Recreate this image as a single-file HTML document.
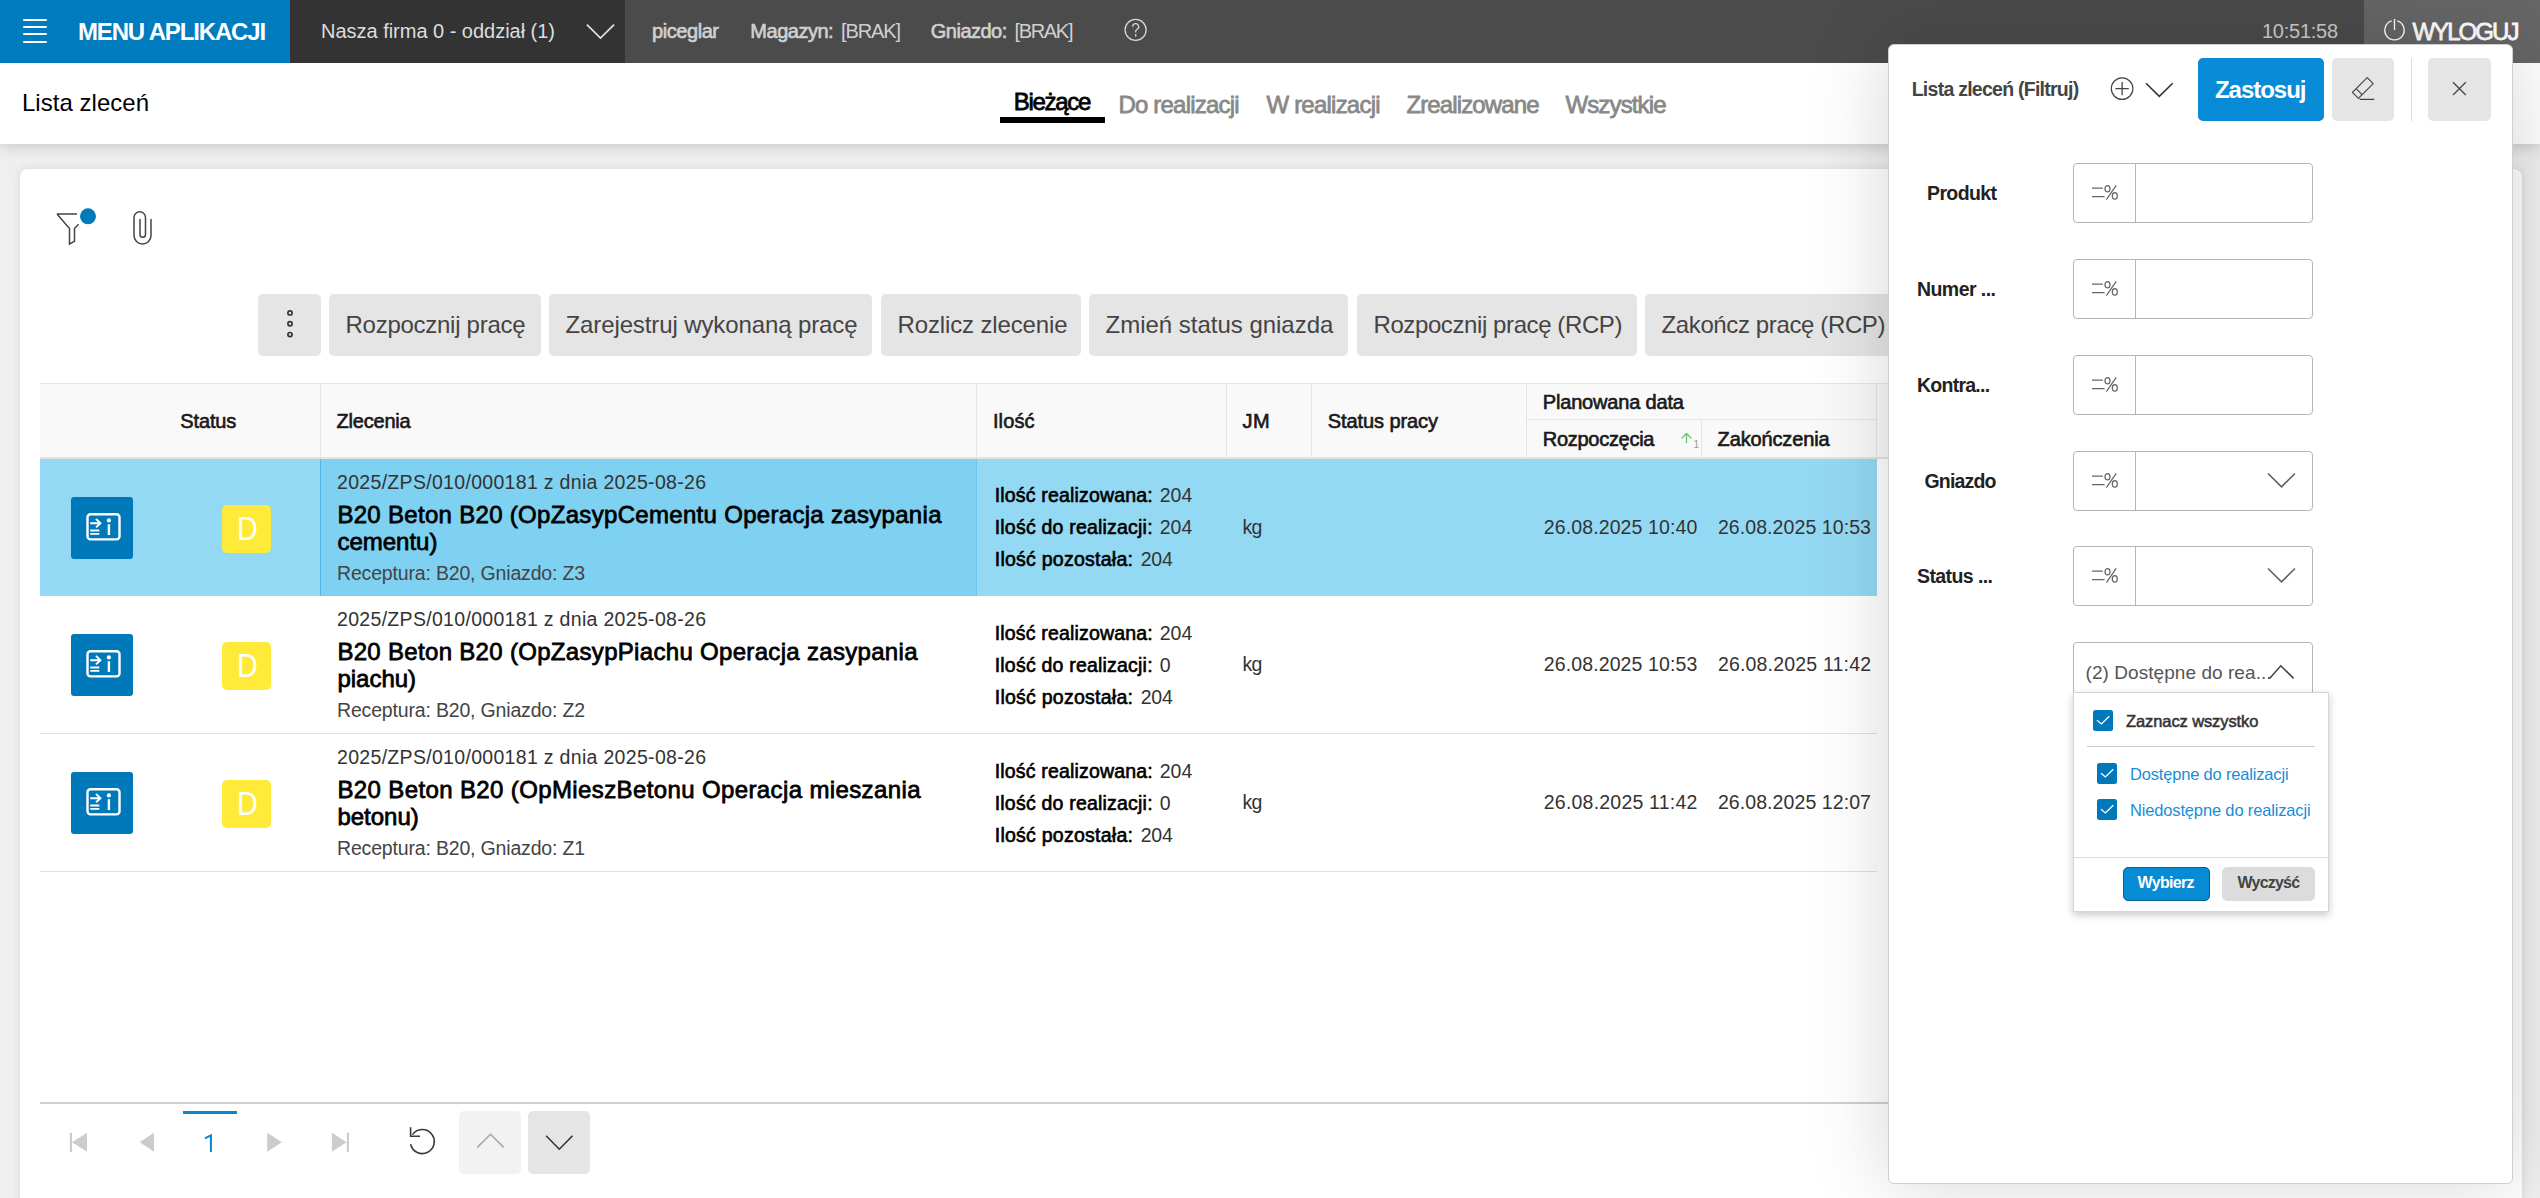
<!DOCTYPE html>
<html><head><meta charset="utf-8"><title>Lista zleceń</title>
<style>
html,body{margin:0;padding:0;width:2540px;height:1198px;overflow:hidden;background:#efefef;}
body{position:relative;font-family:"Liberation Sans",sans-serif;}
.r{position:absolute;box-sizing:border-box;}
.t{position:absolute;white-space:nowrap;line-height:1.117;}
.n{font-weight:normal;color:#333;}
</style></head><body>
<div class="r" style="left:0px;top:0px;width:2540px;height:1198px;background:#efefef;"></div>
<div class="r" style="left:0px;top:63px;width:2540px;height:81px;background:#fff;box-shadow:0 2px 14px rgba(0,0,0,0.18);"></div>
<div class="r" style="left:20px;top:169px;width:2502px;height:1100px;background:#fff;border-radius:8px;box-shadow:0 0 10px rgba(0,0,0,0.10);"></div>
<div class="r" style="left:0px;top:0px;width:2540px;height:63px;background:#4b4b4b;"></div>
<div class="r" style="left:0px;top:0px;width:290px;height:63px;background:#007bbd;"></div>
<div class="r" style="left:290px;top:0px;width:335px;height:63px;background:#333333;"></div>
<div class="r" style="left:2364px;top:0px;width:176px;height:63px;background:#666666;"></div>
<div class="r" style="left:23px;top:18.9px;width:24px;height:2.1px;background:#fff;border-radius:1px;"></div>
<div class="r" style="left:23px;top:26.1px;width:24px;height:2.1px;background:#fff;border-radius:1px;"></div>
<div class="r" style="left:23px;top:33.4px;width:24px;height:2.1px;background:#fff;border-radius:1px;"></div>
<div class="r" style="left:23px;top:40.8px;width:24px;height:2.1px;background:#fff;border-radius:1px;"></div>
<div class="t" style="left:78.00px;top:18.78px;font-size:24px;color:#fff;font-weight:bold;letter-spacing:-1.154px;">MENU APLIKACJI</div>
<div class="t" style="left:321.00px;top:20.40px;font-size:20px;color:#dddddd;letter-spacing:-0.019px;">Nasza firma 0 - oddział (1)</div>
<svg class="r" style="left:575px;top:10px" width="60" height="40" viewBox="575 10 60 40"><path d="M586.9 24.7 L600.5 38.1 L614.1 24.7" fill="none" stroke="#e0e0e0" stroke-width="1.8"/></svg>
<div class="t" style="left:652.12px;top:20.40px;font-size:20px;color:#d0d0d0;-webkit-text-stroke:0.64px #d0d0d0;letter-spacing:-0.449px;">piceglar</div>
<div class="t" style="left:750.32px;top:20.40px;font-size:20px;color:#d0d0d0;-webkit-text-stroke:0.64px #d0d0d0;letter-spacing:-0.484px;">Magazyn:</div>
<div class="t" style="left:841.00px;top:20.40px;font-size:20px;color:#d0d0d0;letter-spacing:-1.100px;">[BRAK]</div>
<div class="t" style="left:930.82px;top:20.40px;font-size:20px;color:#d0d0d0;-webkit-text-stroke:0.64px #d0d0d0;letter-spacing:-0.520px;">Gniazdo:</div>
<div class="t" style="left:1014.40px;top:20.40px;font-size:20px;color:#d0d0d0;letter-spacing:-1.300px;">[BRAK]</div>
<svg class="r" style="left:1115px;top:12px" width="40" height="38" viewBox="1115 12 40 38"><circle cx="1135.6" cy="29.9" r="10.5" fill="none" stroke="#d6d6d6" stroke-width="1.3"/><path d="M1132.7 26.8 A3 3 0 1 1 1137.1 29.3 C1136.2 29.8 1135.7 30.3 1135.7 31.3 V32.6" fill="none" stroke="#d6d6d6" stroke-width="1.3"/><rect x="1135.05" y="34" width="1.3" height="2.6" fill="#d6d6d6"/></svg>
<div class="t" style="left:2262.00px;top:20.40px;font-size:20px;color:#cccccc;letter-spacing:-0.250px;">10:51:58</div>
<svg class="r" style="left:2375px;top:12px" width="40" height="38" viewBox="2375 12 40 38"><path d="M2391.66 20.97 A9.7 9.7 0 1 0 2397.34 20.97" fill="none" stroke="#fff" stroke-width="1.35"/><path d="M2394.5 19 V30.1" stroke="#fff" stroke-width="1.35"/></svg>
<div class="t" style="left:2412.38px;top:18.78px;font-size:24px;color:#ffffff;-webkit-text-stroke:0.77px #ffffff;letter-spacing:-1.920px;">WYLOGUJ</div>
<div class="t" style="left:22.00px;top:89.78px;font-size:24px;color:#000;letter-spacing:0.023px;">Lista zleceń</div>
<div class="t" style="left:1013.68px;top:89.48px;font-size:24px;color:#000;-webkit-text-stroke:0.77px #000;letter-spacing:-1.295px;">Bieżące</div>
<div class="r" style="left:1000px;top:117px;width:105px;height:5.7px;background:#000;"></div>
<div class="t" style="left:1118.38px;top:91.78px;font-size:24px;color:#888;-webkit-text-stroke:0.77px #888;letter-spacing:-0.793px;">Do realizacji</div>
<div class="t" style="left:1266.38px;top:91.78px;font-size:24px;color:#888;-webkit-text-stroke:0.77px #888;letter-spacing:-0.774px;">W realizacji</div>
<div class="t" style="left:1406.38px;top:91.78px;font-size:24px;color:#888;-webkit-text-stroke:0.77px #888;letter-spacing:-0.865px;">Zrealizowane</div>
<div class="t" style="left:1565.38px;top:91.78px;font-size:24px;color:#888;-webkit-text-stroke:0.77px #888;letter-spacing:-0.846px;">Wszystkie</div>
<svg class="r" style="left:50px;top:200px" width="50" height="50" viewBox="50 200 50 50"><path d="M57 214 H77 M57 214 L69.5 228.5 V244 L74.5 241.3 V228.5 L78.5 224.3" fill="none" stroke="#444" stroke-width="1.5" stroke-linejoin="miter"/><circle cx="88" cy="216.3" r="8" fill="#0079bb"/></svg>
<svg class="r" style="left:125px;top:205px" width="35" height="45" viewBox="125 205 35 45"><path d="M140 219 V234.5 A2.75 2.75 0 0 0 145.5 234.5 V217.5 A5.75 5.75 0 0 0 134 217.5 V235.5 A8.5 8.5 0 0 0 151 235.5 V219" fill="none" stroke="#444" stroke-width="1.5"/></svg>
<div class="r" style="left:258px;top:294px;width:63px;height:62px;background:#e5e5e5;border-radius:5px;"></div>
<svg class="r" style="left:280px;top:305px" width="20" height="40" viewBox="280 305 20 40"><g fill="none" stroke="#333" stroke-width="1.7"><circle cx="290" cy="312.9" r="2.1"/><circle cx="290" cy="323.7" r="2.1"/><circle cx="290" cy="334.6" r="2.1"/></g></svg>
<div class="r" style="left:329px;top:294px;width:212px;height:62px;background:#e5e5e5;border-radius:5px;"></div>
<div class="t" style="left:345.50px;top:311.78px;font-size:24px;color:#444;letter-spacing:-0.267px;">Rozpocznij pracę</div>
<div class="r" style="left:549px;top:294px;width:323px;height:62px;background:#e5e5e5;border-radius:5px;"></div>
<div class="t" style="left:565.50px;top:311.78px;font-size:24px;color:#444;letter-spacing:-0.110px;">Zarejestruj wykonaną pracę</div>
<div class="r" style="left:881px;top:294px;width:200px;height:62px;background:#e5e5e5;border-radius:5px;"></div>
<div class="t" style="left:897.50px;top:311.78px;font-size:24px;color:#444;letter-spacing:-0.133px;">Rozlicz zlecenie</div>
<div class="r" style="left:1089px;top:294px;width:259px;height:62px;background:#e5e5e5;border-radius:5px;"></div>
<div class="t" style="left:1105.50px;top:311.78px;font-size:24px;color:#444;letter-spacing:-0.013px;">Zmień status gniazda</div>
<div class="r" style="left:1357px;top:294px;width:280px;height:62px;background:#e5e5e5;border-radius:5px;"></div>
<div class="t" style="left:1373.50px;top:311.78px;font-size:24px;color:#444;letter-spacing:-0.405px;">Rozpocznij pracę (RCP)</div>
<div class="r" style="left:1645px;top:294px;width:260px;height:62px;background:#e5e5e5;border-radius:5px;"></div>
<div class="t" style="left:1661.50px;top:311.78px;font-size:24px;color:#444;letter-spacing:-0.375px;">Zakończ pracę (RCP)</div>
<div class="r" style="left:40px;top:383px;width:1848px;height:1px;background:#e6e6e6;"></div>
<div class="r" style="left:40px;top:384px;width:1848px;height:73px;background:#f9f9f9;"></div>
<div class="r" style="left:40px;top:457px;width:1848px;height:2px;background:#e3e3e3;"></div>
<div class="r" style="left:320px;top:384px;width:1px;height:73px;background:#e6e6e6;"></div>
<div class="r" style="left:976px;top:384px;width:1px;height:73px;background:#e6e6e6;"></div>
<div class="r" style="left:1226px;top:384px;width:1px;height:73px;background:#e6e6e6;"></div>
<div class="r" style="left:1311px;top:384px;width:1px;height:73px;background:#e6e6e6;"></div>
<div class="r" style="left:1526px;top:384px;width:1px;height:73px;background:#e6e6e6;"></div>
<div class="r" style="left:1526px;top:419px;width:350px;height:1px;background:#e6e6e6;"></div>
<div class="r" style="left:1701px;top:420px;width:1px;height:37px;background:#e6e6e6;"></div>
<div class="r" style="left:1876px;top:384px;width:1px;height:73px;background:#e6e6e6;"></div>
<div class="t" style="left:180.32px;top:410.40px;font-size:20px;color:#1a1a1a;-webkit-text-stroke:0.64px #1a1a1a;letter-spacing:-0.138px;">Status</div>
<div class="t" style="left:336.62px;top:410.40px;font-size:20px;color:#1a1a1a;-webkit-text-stroke:0.64px #1a1a1a;letter-spacing:-0.227px;">Zlecenia</div>
<div class="t" style="left:992.92px;top:410.40px;font-size:20px;color:#1a1a1a;-webkit-text-stroke:0.64px #1a1a1a;letter-spacing:0.127px;">Ilość</div>
<div class="t" style="left:1242.62px;top:410.40px;font-size:20px;color:#1a1a1a;-webkit-text-stroke:0.64px #1a1a1a;letter-spacing:0.310px;">JM</div>
<div class="t" style="left:1327.72px;top:410.40px;font-size:20px;color:#1a1a1a;-webkit-text-stroke:0.64px #1a1a1a;letter-spacing:-0.081px;">Status pracy</div>
<div class="t" style="left:1542.82px;top:390.90px;font-size:20px;color:#1a1a1a;-webkit-text-stroke:0.64px #1a1a1a;letter-spacing:-0.180px;">Planowana data</div>
<div class="t" style="left:1542.82px;top:427.90px;font-size:20px;color:#1a1a1a;-webkit-text-stroke:0.64px #1a1a1a;letter-spacing:-0.289px;">Rozpoczęcia</div>
<div class="t" style="left:1717.62px;top:427.90px;font-size:20px;color:#1a1a1a;-webkit-text-stroke:0.64px #1a1a1a;letter-spacing:-0.144px;">Zakończenia</div>
<svg class="r" style="left:1678px;top:430px" width="24" height="22" viewBox="1678 430 24 22"><path d="M1686.5 443 V433.5 M1681.5 438.5 L1686.5 433.5 L1691.5 438.5" fill="none" stroke="#6ac66a" stroke-width="1.3"/></svg>
<div class="t" style="left:1693.50px;top:439.45px;font-size:10px;color:#999;">1</div>
<div class="r" style="left:40px;top:459px;width:1837px;height:137px;background:#94d9f3;"></div>
<div class="r" style="left:320px;top:459px;width:657px;height:137px;background:#7fd1f1;border-left:1.5px solid #4cb8e6;border-right:1px solid #6cc6ec;"></div>
<div class="r" style="left:71px;top:497px;width:62px;height:62px;background:#0079bb;border-radius:3px;"></div>
<svg class="r" style="left:71px;top:497px" width="62" height="62" viewBox="0 0 62 62"><rect x="16.5" y="17.2" width="32" height="25.2" rx="3" fill="none" stroke="#fff" stroke-width="2.4"/><path d="M19.3 26.2 H29.6 M25 21.9 L29.4 26.2 L25 30.4" fill="none" stroke="#fff" stroke-width="2"/><path d="M19.3 33.5 H28.3 M19.3 36.9 H28.3" fill="none" stroke="#fff" stroke-width="1.9"/><circle cx="37.9" cy="23.4" r="2.1" fill="#fff"/><path d="M37.9 27.2 V38" stroke="#fff" stroke-width="2.4"/></svg>
<div class="r" style="left:221.6px;top:505px;width:49px;height:48px;background:#ffea3a;border-radius:5px;"></div>
<div class="t" style="left:236.90px;top:509.73px;font-size:34px;color:#fff;transform-origin:0.00px 0;transform:scaleX(0.8462);">D</div>
<div class="t" style="left:337.00px;top:471.65px;font-size:19.5px;color:#333;letter-spacing:0.312px;">2025/ZPS/010/000181 z dnia 2025-08-26</div>
<div class="t" style="left:337.38px;top:501.78px;font-size:24px;color:#000;-webkit-text-stroke:0.77px #000;letter-spacing:0.308px;">B20 Beton B20 (OpZasypCementu Operacja zasypania</div>
<div class="t" style="left:337.38px;top:528.58px;font-size:24px;color:#000;-webkit-text-stroke:0.77px #000;">cementu)</div>
<div class="t" style="left:337.00px;top:562.75px;font-size:19.5px;color:#444;letter-spacing:-0.173px;">Receptura: B20, Gniazdo: Z3</div>
<div class="t" style="left:994.71px;top:484.85px;font-size:19.5px;color:#000;-webkit-text-stroke:0.62px #000;letter-spacing:0.175px;">Ilość realizowana:</div>
<div class="t" style="left:1159.70px;top:484.85px;font-size:19.5px;color:#333;">204</div>
<div class="t" style="left:994.71px;top:516.85px;font-size:19.5px;color:#000;-webkit-text-stroke:0.62px #000;letter-spacing:0.209px;">Ilość do realizacji:</div>
<div class="t" style="left:1159.70px;top:516.85px;font-size:19.5px;color:#333;">204</div>
<div class="t" style="left:994.71px;top:548.85px;font-size:19.5px;color:#000;-webkit-text-stroke:0.62px #000;letter-spacing:0.258px;">Ilość pozostała:</div>
<div class="t" style="left:1140.70px;top:548.85px;font-size:19.5px;color:#333;letter-spacing:-0.250px;">204</div>
<div class="t" style="left:1242.40px;top:516.65px;font-size:19.5px;color:#333;letter-spacing:-0.600px;">kg</div>
<div class="t" style="left:1543.80px;top:516.65px;font-size:19.5px;color:#333;letter-spacing:0.110px;">26.08.2025 10:40</div>
<div class="t" style="left:1717.90px;top:516.65px;font-size:19.5px;color:#333;letter-spacing:0.083px;">26.08.2025 10:53</div>
<div class="r" style="left:40px;top:733px;width:1837px;height:1px;background:#e2e2e2;"></div>
<div class="r" style="left:71px;top:634px;width:62px;height:62px;background:#0079bb;border-radius:3px;"></div>
<svg class="r" style="left:71px;top:634px" width="62" height="62" viewBox="0 0 62 62"><rect x="16.5" y="17.2" width="32" height="25.2" rx="3" fill="none" stroke="#fff" stroke-width="2.4"/><path d="M19.3 26.2 H29.6 M25 21.9 L29.4 26.2 L25 30.4" fill="none" stroke="#fff" stroke-width="2"/><path d="M19.3 33.5 H28.3 M19.3 36.9 H28.3" fill="none" stroke="#fff" stroke-width="1.9"/><circle cx="37.9" cy="23.4" r="2.1" fill="#fff"/><path d="M37.9 27.2 V38" stroke="#fff" stroke-width="2.4"/></svg>
<div class="r" style="left:221.6px;top:642px;width:49px;height:48px;background:#ffea3a;border-radius:5px;"></div>
<div class="t" style="left:236.90px;top:646.73px;font-size:34px;color:#fff;transform-origin:0.00px 0;transform:scaleX(0.8462);">D</div>
<div class="t" style="left:337.00px;top:609.35px;font-size:19.5px;color:#333;letter-spacing:0.312px;">2025/ZPS/010/000181 z dnia 2025-08-26</div>
<div class="t" style="left:337.38px;top:639.48px;font-size:24px;color:#000;-webkit-text-stroke:0.77px #000;letter-spacing:0.315px;">B20 Beton B20 (OpZasypPiachu Operacja zasypania</div>
<div class="t" style="left:337.38px;top:666.28px;font-size:24px;color:#000;-webkit-text-stroke:0.77px #000;">piachu)</div>
<div class="t" style="left:337.00px;top:700.45px;font-size:19.5px;color:#444;letter-spacing:-0.173px;">Receptura: B20, Gniazdo: Z2</div>
<div class="t" style="left:994.71px;top:622.65px;font-size:19.5px;color:#000;-webkit-text-stroke:0.62px #000;letter-spacing:0.175px;">Ilość realizowana:</div>
<div class="t" style="left:1159.70px;top:622.65px;font-size:19.5px;color:#333;">204</div>
<div class="t" style="left:994.71px;top:654.65px;font-size:19.5px;color:#000;-webkit-text-stroke:0.62px #000;letter-spacing:0.209px;">Ilość do realizacji:</div>
<div class="t" style="left:1159.70px;top:654.65px;font-size:19.5px;color:#333;">0</div>
<div class="t" style="left:994.71px;top:686.65px;font-size:19.5px;color:#000;-webkit-text-stroke:0.62px #000;letter-spacing:0.258px;">Ilość pozostała:</div>
<div class="t" style="left:1140.70px;top:686.65px;font-size:19.5px;color:#333;letter-spacing:-0.250px;">204</div>
<div class="t" style="left:1242.40px;top:654.45px;font-size:19.5px;color:#333;letter-spacing:-0.600px;">kg</div>
<div class="t" style="left:1543.80px;top:654.45px;font-size:19.5px;color:#333;letter-spacing:0.110px;">26.08.2025 10:53</div>
<div class="t" style="left:1717.90px;top:654.45px;font-size:19.5px;color:#333;letter-spacing:0.183px;">26.08.2025 11:42</div>
<div class="r" style="left:40px;top:871px;width:1837px;height:1px;background:#e2e2e2;"></div>
<div class="r" style="left:71px;top:772px;width:62px;height:62px;background:#0079bb;border-radius:3px;"></div>
<svg class="r" style="left:71px;top:772px" width="62" height="62" viewBox="0 0 62 62"><rect x="16.5" y="17.2" width="32" height="25.2" rx="3" fill="none" stroke="#fff" stroke-width="2.4"/><path d="M19.3 26.2 H29.6 M25 21.9 L29.4 26.2 L25 30.4" fill="none" stroke="#fff" stroke-width="2"/><path d="M19.3 33.5 H28.3 M19.3 36.9 H28.3" fill="none" stroke="#fff" stroke-width="1.9"/><circle cx="37.9" cy="23.4" r="2.1" fill="#fff"/><path d="M37.9 27.2 V38" stroke="#fff" stroke-width="2.4"/></svg>
<div class="r" style="left:221.6px;top:780px;width:49px;height:48px;background:#ffea3a;border-radius:5px;"></div>
<div class="t" style="left:236.90px;top:784.73px;font-size:34px;color:#fff;transform-origin:0.00px 0;transform:scaleX(0.8462);">D</div>
<div class="t" style="left:337.00px;top:746.65px;font-size:19.5px;color:#333;letter-spacing:0.312px;">2025/ZPS/010/000181 z dnia 2025-08-26</div>
<div class="t" style="left:337.38px;top:776.78px;font-size:24px;color:#000;-webkit-text-stroke:0.77px #000;letter-spacing:0.380px;">B20 Beton B20 (OpMieszBetonu Operacja mieszania</div>
<div class="t" style="left:337.38px;top:803.58px;font-size:24px;color:#000;-webkit-text-stroke:0.77px #000;">betonu)</div>
<div class="t" style="left:337.00px;top:837.75px;font-size:19.5px;color:#444;letter-spacing:-0.173px;">Receptura: B20, Gniazdo: Z1</div>
<div class="t" style="left:994.71px;top:760.65px;font-size:19.5px;color:#000;-webkit-text-stroke:0.62px #000;letter-spacing:0.175px;">Ilość realizowana:</div>
<div class="t" style="left:1159.70px;top:760.65px;font-size:19.5px;color:#333;">204</div>
<div class="t" style="left:994.71px;top:792.65px;font-size:19.5px;color:#000;-webkit-text-stroke:0.62px #000;letter-spacing:0.209px;">Ilość do realizacji:</div>
<div class="t" style="left:1159.70px;top:792.65px;font-size:19.5px;color:#333;">0</div>
<div class="t" style="left:994.71px;top:824.65px;font-size:19.5px;color:#000;-webkit-text-stroke:0.62px #000;letter-spacing:0.258px;">Ilość pozostała:</div>
<div class="t" style="left:1140.70px;top:824.65px;font-size:19.5px;color:#333;letter-spacing:-0.250px;">204</div>
<div class="t" style="left:1242.40px;top:792.45px;font-size:19.5px;color:#333;letter-spacing:-0.600px;">kg</div>
<div class="t" style="left:1543.80px;top:792.45px;font-size:19.5px;color:#333;letter-spacing:0.210px;">26.08.2025 11:42</div>
<div class="t" style="left:1717.90px;top:792.45px;font-size:19.5px;color:#333;letter-spacing:0.083px;">26.08.2025 12:07</div>
<div class="r" style="left:40px;top:1102px;width:1848px;height:1.5px;background:#cfcfcf;"></div>
<div class="r" style="left:183px;top:1111px;width:54px;height:3px;background:#0a86d0;"></div>
<svg class="r" style="left:60px;top:1120px" width="300" height="45" viewBox="60 1120 300 45"><g fill="#cccccc"><rect x="69.8" y="1132.8" width="2.2" height="19"/><path d="M87 1132.8 V1151.7 L72 1142.2 Z"/><path d="M154 1132.8 V1151.7 L139.7 1142.2 Z"/><path d="M267.2 1132.8 V1151.7 L282 1142.2 Z"/><path d="M331.9 1132.8 V1151.7 L346.6 1142.2 Z"/><rect x="346.8" y="1132.8" width="2.2" height="19"/></g></svg>
<svg class="r" style="left:200px;top:1130px" width="20" height="26" viewBox="200 1130 20 26"><path d="M204.9 1138.3 L210.9 1135.3 V1152" fill="none" stroke="#0a86d0" stroke-width="2" stroke-linejoin="miter"/></svg>
<svg class="r" style="left:400px;top:1120px" width="40" height="45" viewBox="400 1120 40 45"><path d="M410.6 1144.3 A12 12 0 1 0 412.5 1134.6" fill="none" stroke="#3a3a3a" stroke-width="1.6"/><path d="M410.6 1127.2 V1136.3 H420" fill="none" stroke="#3a3a3a" stroke-width="1.6"/></svg>
<div class="r" style="left:459px;top:1111px;width:62px;height:63px;background:#f2f2f2;border-radius:5px;"></div>
<div class="r" style="left:528px;top:1111px;width:62px;height:63px;background:#e5e5e5;border-radius:5px;"></div>
<svg class="r" style="left:459px;top:1111px" width="131" height="63" viewBox="459 1111 131 63"><path d="M477.3 1147.4 L490.5 1134.3 L503.7 1147.4" fill="none" stroke="#a8a8a8" stroke-width="1.6"/><path d="M546.1 1135.8 L559.3 1149.2 L572.5 1135.8" fill="none" stroke="#333" stroke-width="1.6"/></svg>
<div class="r" style="left:1888px;top:44px;width:625px;height:1140px;background:#fff;border:1px solid #cfcfcf;border-radius:6px;box-shadow:0 0 80px rgba(0,0,0,0.17);"></div>
<div class="t" style="left:1911.70px;top:78.85px;font-size:19.5px;color:#444;font-weight:bold;letter-spacing:-0.743px;">Lista zleceń (Filtruj)</div>
<svg class="r" style="left:2105px;top:72px" width="75" height="34" viewBox="2105 72 75 34"><circle cx="2122.1" cy="88.6" r="10.8" fill="none" stroke="#444" stroke-width="1.2"/><path d="M2115.4 88.6 H2128.8 M2122.1 81.9 V95.3" stroke="#444" stroke-width="1.3"/><path d="M2146 83.2 L2159.3 96.4 L2172.7 83.2" fill="none" stroke="#333" stroke-width="1.6"/></svg>
<div class="r" style="left:2198px;top:58px;width:126px;height:63px;background:#088bd6;border-radius:5px;"></div>
<div class="t" style="left:2215.00px;top:76.78px;font-size:24px;color:#fff;font-weight:bold;letter-spacing:-1.036px;">Zastosuj</div>
<div class="r" style="left:2332px;top:58px;width:62px;height:63px;background:#e5e5e5;border-radius:5px;"></div>
<svg class="r" style="left:2332px;top:58px" width="62" height="63" viewBox="2332 58 62 63"><path d="M2367.2 77.6 L2373.2 83.6 L2358.4 98.4 L2352.4 92.4 Z M2356.1 88.7 L2362.1 94.7 M2359.6 99.4 H2374.3" fill="none" stroke="#444" stroke-width="1.2" stroke-linejoin="round"/></svg>
<div class="r" style="left:2411px;top:58px;width:1px;height:63px;background:#dddddd;"></div>
<div class="r" style="left:2428px;top:58px;width:63px;height:63px;background:#e5e5e5;border-radius:5px;"></div>
<svg class="r" style="left:2428px;top:58px" width="63" height="63" viewBox="2428 58 63 63"><path d="M2453 82.3 L2465.8 95 M2465.8 82.3 L2453 95" stroke="#444" stroke-width="1.3"/></svg>
<div class="t" style="left:1927.00px;top:182.85px;font-size:19.5px;color:#222;font-weight:bold;letter-spacing:-0.625px;">Produkt</div>
<div class="r" style="left:2073px;top:163px;width:240px;height:60px;background:#fff;border:1px solid #b5b5b5;border-radius:4px;"></div>
<div class="r" style="left:2135px;top:164px;width:1px;height:58px;background:#b5b5b5;"></div>
<svg class="r" style="left:2088px;top:181px" width="34" height="24" viewBox="0 0 34 24"><g fill="none" stroke="#666" stroke-width="1.25"><path d="M4 7 H14.8 M4 15.6 H16.6 M18.4 18.6 L28.2 4.3"/><ellipse cx="19.5" cy="7.7" rx="2.5" ry="3.2"/><ellipse cx="26.8" cy="14.9" rx="2.5" ry="3.2"/></g></svg>
<div class="t" style="left:1917.00px;top:278.85px;font-size:19.5px;color:#222;font-weight:bold;letter-spacing:-0.562px;">Numer ...</div>
<div class="r" style="left:2073px;top:259px;width:240px;height:60px;background:#fff;border:1px solid #b5b5b5;border-radius:4px;"></div>
<div class="r" style="left:2135px;top:260px;width:1px;height:58px;background:#b5b5b5;"></div>
<svg class="r" style="left:2088px;top:277px" width="34" height="24" viewBox="0 0 34 24"><g fill="none" stroke="#666" stroke-width="1.25"><path d="M4 7 H14.8 M4 15.6 H16.6 M18.4 18.6 L28.2 4.3"/><ellipse cx="19.5" cy="7.7" rx="2.5" ry="3.2"/><ellipse cx="26.8" cy="14.9" rx="2.5" ry="3.2"/></g></svg>
<div class="t" style="left:1917.00px;top:374.85px;font-size:19.5px;color:#222;font-weight:bold;letter-spacing:-0.750px;">Kontra...</div>
<div class="r" style="left:2073px;top:355px;width:240px;height:60px;background:#fff;border:1px solid #b5b5b5;border-radius:4px;"></div>
<div class="r" style="left:2135px;top:356px;width:1px;height:58px;background:#b5b5b5;"></div>
<svg class="r" style="left:2088px;top:373px" width="34" height="24" viewBox="0 0 34 24"><g fill="none" stroke="#666" stroke-width="1.25"><path d="M4 7 H14.8 M4 15.6 H16.6 M18.4 18.6 L28.2 4.3"/><ellipse cx="19.5" cy="7.7" rx="2.5" ry="3.2"/><ellipse cx="26.8" cy="14.9" rx="2.5" ry="3.2"/></g></svg>
<div class="t" style="left:1924.50px;top:470.85px;font-size:19.5px;color:#222;font-weight:bold;letter-spacing:-0.833px;">Gniazdo</div>
<div class="r" style="left:2073px;top:451px;width:240px;height:60px;background:#fff;border:1px solid #b5b5b5;border-radius:4px;"></div>
<div class="r" style="left:2135px;top:452px;width:1px;height:58px;background:#b5b5b5;"></div>
<svg class="r" style="left:2088px;top:469px" width="34" height="24" viewBox="0 0 34 24"><g fill="none" stroke="#666" stroke-width="1.25"><path d="M4 7 H14.8 M4 15.6 H16.6 M18.4 18.6 L28.2 4.3"/><ellipse cx="19.5" cy="7.7" rx="2.5" ry="3.2"/><ellipse cx="26.8" cy="14.9" rx="2.5" ry="3.2"/></g></svg>
<svg class="r" style="left:2262px;top:469px" width="40" height="24" viewBox="0 0 40 24"><path d="M6 4.5 L19.5 17.8 L33 4.5" fill="none" stroke="#616161" stroke-width="1.6"/></svg>
<div class="t" style="left:1917.00px;top:565.85px;font-size:19.5px;color:#222;font-weight:bold;letter-spacing:-0.583px;">Status ...</div>
<div class="r" style="left:2073px;top:546px;width:240px;height:60px;background:#fff;border:1px solid #b5b5b5;border-radius:4px;"></div>
<div class="r" style="left:2135px;top:547px;width:1px;height:58px;background:#b5b5b5;"></div>
<svg class="r" style="left:2088px;top:564px" width="34" height="24" viewBox="0 0 34 24"><g fill="none" stroke="#666" stroke-width="1.25"><path d="M4 7 H14.8 M4 15.6 H16.6 M18.4 18.6 L28.2 4.3"/><ellipse cx="19.5" cy="7.7" rx="2.5" ry="3.2"/><ellipse cx="26.8" cy="14.9" rx="2.5" ry="3.2"/></g></svg>
<svg class="r" style="left:2262px;top:564px" width="40" height="24" viewBox="0 0 40 24"><path d="M6 4.5 L19.5 17.8 L33 4.5" fill="none" stroke="#616161" stroke-width="1.6"/></svg>
<div class="r" style="left:2073px;top:642px;width:240px;height:60px;background:#fff;border:1px solid #b5b5b5;border-radius:4px;"></div>
<div class="t" style="left:2085.50px;top:661.80px;font-size:19px;color:#555;letter-spacing:0.060px;">(2) Dostępne do rea...</div>
<svg class="r" style="left:2262px;top:658px" width="40" height="24" viewBox="2262 658 40 24"><path d="M2269.6 678.4 L2280.8 665.8 L2293.6 678.4" fill="none" stroke="#444" stroke-width="1.5"/></svg>
<div class="r" style="left:2073px;top:692px;width:256px;height:220px;background:#fff;border:1px solid #d6d6d6;box-shadow:0 3px 8px rgba(0,0,0,0.22);"></div>
<div class="r" style="left:2093px;top:710px;width:20px;height:21px;background:#0079bb;border-radius:2.5px;"></div>
<svg class="r" style="left:2093px;top:710px" width="20" height="21" viewBox="0 0 20 21"><path d="M4 10.2 L8.4 13.9 L16.3 6.2" fill="none" stroke="#fff" stroke-width="1.3"/></svg>
<div class="t" style="left:2126.06px;top:712.17px;font-size:16.5px;color:#333;-webkit-text-stroke:0.53px #333;letter-spacing:-0.105px;">Zaznacz wszystko</div>
<div class="r" style="left:2087px;top:746px;width:228px;height:1px;background:#cccccc;"></div>
<div class="r" style="left:2097px;top:762.5px;width:20px;height:21px;background:#0079bb;border-radius:2.5px;"></div>
<svg class="r" style="left:2097px;top:762.5px" width="20" height="21" viewBox="0 0 20 21"><path d="M4 10.2 L8.4 13.9 L16.3 6.2" fill="none" stroke="#fff" stroke-width="1.3"/></svg>
<div class="t" style="left:2130.00px;top:764.57px;font-size:16.5px;color:#1a8dd6;letter-spacing:-0.179px;">Dostępne do realizacji</div>
<div class="r" style="left:2097px;top:798.5px;width:20px;height:21px;background:#0079bb;border-radius:2.5px;"></div>
<svg class="r" style="left:2097px;top:798.5px" width="20" height="21" viewBox="0 0 20 21"><path d="M4 10.2 L8.4 13.9 L16.3 6.2" fill="none" stroke="#fff" stroke-width="1.3"/></svg>
<div class="t" style="left:2130.00px;top:800.87px;font-size:16.5px;color:#1a8dd6;letter-spacing:-0.156px;">Niedostępne do realizacji</div>
<div class="r" style="left:2074px;top:857px;width:254px;height:1px;background:#dddddd;"></div>
<div class="r" style="left:2123px;top:867px;width:87px;height:34px;background:#078bd5;border:1.5px solid #0b5e92;border-radius:5px;"></div>
<div class="t" style="left:2137.50px;top:874.32px;font-size:16px;color:#fff;font-weight:bold;letter-spacing:-0.667px;">Wybierz</div>
<div class="r" style="left:2222px;top:867px;width:93px;height:34px;background:#dcdcdc;border-radius:5px;"></div>
<div class="t" style="left:2237.50px;top:874.32px;font-size:16px;color:#444;font-weight:bold;letter-spacing:-0.792px;">Wyczyść</div>
</body></html>
